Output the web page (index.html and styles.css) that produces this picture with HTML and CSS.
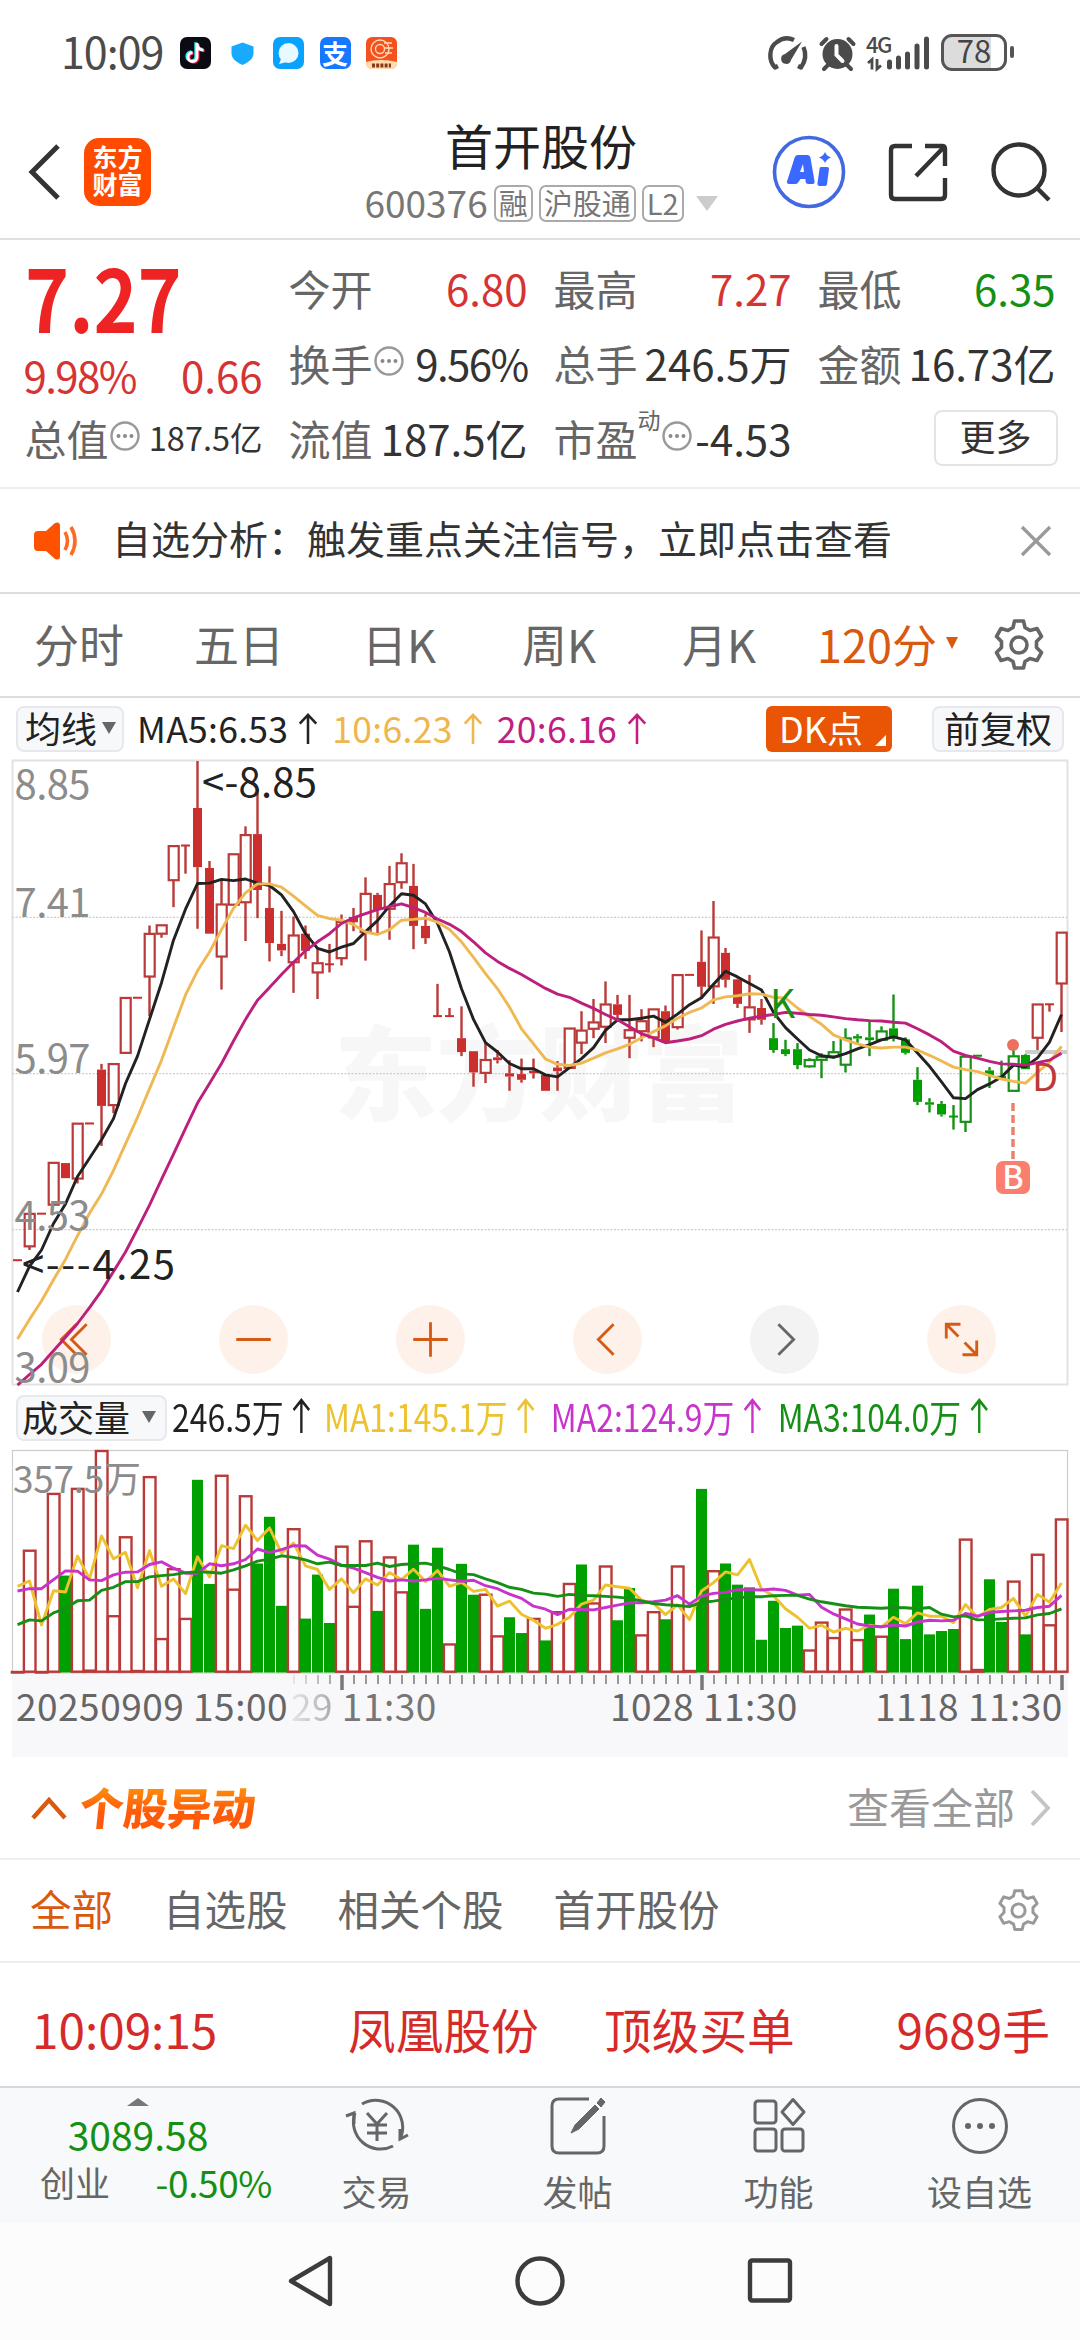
FILE: index.html
```html
<!DOCTYPE html>
<html lang="zh-CN">
<head>
<meta charset="utf-8">
<title>首开股份 600376</title>
<link rel="stylesheet" href="styles.css">
</head>
<body>
<svg class="defs" width="0" height="0">
  <symbol id="up" viewBox="0 0 20 32"><path d="M10 32V2M1.500 11L10 2l8.500 9" fill="none" stroke="currentColor" stroke-width="2.600"/></symbol>
  <symbol id="gear" viewBox="0 0 52 52"><path d="M21.500 2h9l1.500 6.500 5 3 7-2 4.500 8-5 5v6l5 5-4.500 8-7-2-5 3-1.500 6.500h-9L20 42.500l-5-3-7 2-4.500-8 5-5v-6l-5-5 4.500-8 7 2 5-3z" fill="none" stroke="currentColor" stroke-width="3.600" stroke-linejoin="round"/><circle cx="26" cy="26" r="8" fill="none" stroke="currentColor" stroke-width="3.600"/></symbol>
  <symbol id="info" viewBox="0 0 30 30"><circle cx="15" cy="15" r="13.500" fill="none" stroke="#999" stroke-width="2.400"/><g fill="#888"><circle cx="8.500" cy="15" r="2"/><circle cx="15" cy="15" r="2"/><circle cx="21.500" cy="15" r="2"/></g></symbol>
</svg>

<div class="status">
  <span class="clock">10:09</span>
  <div class="apps">
    <svg width="31" height="32" viewBox="0 0 31 32"><rect width="31" height="32" rx="7" fill="#0b0b14"/><path d="M17 6v14a4.500 4.500 0 1 1-4.500-4.500M17 7c.5 4 3 6 6.500 6" fill="none" stroke="#2ee" stroke-width="3" transform="translate(-1.200 -.8)"/><path d="M17 6v14a4.500 4.500 0 1 1-4.500-4.500M17 7c.5 4 3 6 6.500 6" fill="none" stroke="#f25" stroke-width="3" transform="translate(1 .8)"/><path d="M17 6v14a4.500 4.500 0 1 1-4.500-4.500M17 7c.5 4 3 6 6.500 6" fill="none" stroke="#fff" stroke-width="2.800"/></svg>
    <svg width="31" height="32" viewBox="0 0 31 32"><path d="M15.500 5.500l11 4v7c0 5-5 9-11 11.500-6-2.500-11-6.500-11-11.500v-7z" fill="#18aaff"/></svg>
    <svg width="31" height="32" viewBox="0 0 31 32"><rect width="31" height="32" rx="7" fill="#0aa2ff"/><circle cx="15.500" cy="16" r="10" fill="#e8f9ff"/><path d="M8 22l-2 5 8-2z" fill="#e8f9ff"/></svg>
    <span class="app-zhi">支</span>
    <svg width="31" height="32" viewBox="0 0 31 32"><rect width="31" height="32" rx="6" fill="#f4511e"/><circle cx="14" cy="12" r="9" fill="none" stroke="#ffd9b8" stroke-width="1.400"/><circle cx="14" cy="12" r="4.500" fill="none" stroke="#ffd9b8" stroke-width="1.400"/><path d="M18 6h8M19 11h8M19 16h7" stroke="#ffd9b8" stroke-width="1.400"/><path d="M0 25q15-4 31 0v2q-1 5-6 5H6q-5 0-6-5z" fill="#ffdcae"/><path d="M6 28.500h19" stroke="#8a3a1a" stroke-width="4" stroke-dasharray="3 1.200"/></svg>
  </div>
  <div class="sys">
    <svg width="40" height="34" viewBox="0 0 40 34"><g fill="none" stroke="#4b4b4b" stroke-width="4.400"><path d="M10 30l-3 1.500C0 24 1 11 9 6c5-4 11-5 17-2M35.500 11c3 7 2 14-2.500 20.500l-3-1.500" stroke-linejoin="round"/></g><path d="M34 5.500L23 24a5 5 0 1 1-6-6z" fill="#4b4b4b"/></svg>
    <svg width="37" height="36" viewBox="0 0 37 36"><circle cx="18.500" cy="19" r="15" fill="#4b4b4b"/><path d="M9 30l-4 4M28 30l4 4M2.500 9l5-5M34.500 9l-5-5" stroke="#4b4b4b" stroke-width="4" stroke-linecap="round"/><path d="M17.500 11v9l6 6" fill="none" stroke="#fff" stroke-width="4" stroke-linecap="round"/></svg>
    <div class="cell">
      <b>4G</b>
      <svg width="66" height="34" viewBox="0 0 66 34"><g stroke="#4b4b4b" fill="none"><path d="M1 27l4-3.500v10M10 23v10l4-3.500" stroke-width="2.800"/><g stroke-width="5" stroke-linecap="round"><path d="M22.500 26v5M31.500 22v9M40.500 18v13M50 10v21M59.500 3v28"/></g></g></svg>
    </div>
    <div class="battery">78</div>
  </div>
</div>

<header class="head">
  <svg class="back" width="36" height="58" viewBox="0 0 36 58"><path d="M32 3L6 29l26 26" fill="none" stroke="#333" stroke-width="5"/></svg>
  <div class="logo">东方<br>财富</div>
  <div class="title">
    <h1>首开股份</h1>
    <div class="sub"><span>600376</span><i>融</i><i>沪股通</i><i>L2</i><svg width="22" height="15" viewBox="0 0 22 15"><path d="M0 0h22L11 15z" fill="#ccc"/></svg></div>
  </div>
  <div class="acts">
    <svg width="74" height="74" viewBox="0 0 74 74"><circle cx="37" cy="37" r="34.500" fill="none" stroke="#4169e1" stroke-width="3.600"/><path d="M26 20h9q3 0 3.500 3l4 23q.5 3-2 3h-4q-3 0-3-3v-2h-5l-2 3q-1 2-3 2h-6q-4 0-2-4l7-22q1-3 3.500-3zM31 29l-3 8h4z" fill="#3b69ff" fill-rule="evenodd"/><path d="M49 32h6q2 0 2 2l-2 15q0 2-2 2h-5q-3 0-2.500-3l2-14q0-2 1.500-2z" fill="#3b69ff"/><path d="M53 17q1.500 4 6 5.500-4.500 1.500-6 5.500-1.500-4-6-5.500 4.500-1.500 6-5.500z" fill="#3b69ff"/></svg>
    <svg width="60" height="60" viewBox="0 0 60 60"><path d="M24 4H7q-4 0-4 4v45q0 4 4 4h46q4 0 4-4V36M37 4h17q3 0 3 3v17M57 4L28 34" fill="none" stroke="#333" stroke-width="4.400"/></svg>
    <svg width="62" height="62" viewBox="0 0 62 62"><circle cx="29" cy="29" r="25.500" fill="none" stroke="#333" stroke-width="4.400"/><path d="M47 47l12 12" stroke="#333" stroke-width="4.400"/></svg>
  </div>
</header>

<section class="quote">
  <div class="price"><strong>7.27</strong></div>
  <div class="q"><span>今开</span><em class="up">6.80</em></div>
  <div class="q"><span>最高</span><em class="up">7.27</em></div>
  <div class="q"><span>最低</span><em class="down">6.35</em></div>
  <div class="q low"><em class="up pct">9.98%</em><em class="up">0.66</em></div>
  <div class="q"><span>换手</span><svg class="info"><use href="#info"/></svg><em class="pct">9.56%</em></div>
  <div class="q"><span>总手</span><em>246.5万</em></div>
  <div class="q"><span>金额</span><em>16.73亿</em></div>
  <div class="q"><span>总值</span><svg class="info"><use href="#info"/></svg><em class="small">187.5亿</em></div>
  <div class="q"><span>流值</span><em>187.5亿</em></div>
  <div class="q"><span>市盈</span><sup>动</sup><svg class="info"><use href="#info"/></svg><em>-4.53</em></div>
  <div class="q end"><button class="more">更多</button></div>
</section>

<section class="notice">
  <svg width="46" height="38" viewBox="0 0 46 38"><path d="M4 9h8L21 1q5-2 5 3v30q0 5-5 3l-9-8H4q-4 0-4-4V13q0-4 4-4z" fill="#ff5200"/><path d="M31 10q5 9 0 18M37 5q8 14 0 28" fill="none" stroke="#ff6a22" stroke-width="3.600"/></svg>
  <p>自选分析：触发重点关注信号，立即点击查看</p>
  <svg width="30" height="30" viewBox="0 0 30 30"><path d="M1 1l28 28M29 1L1 29" stroke="#999" stroke-width="3.200"/></svg>
</section>

<nav class="periods">
  <span>分时</span><span>五日</span><span>日K</span><span>周K</span><span>月K</span>
  <span class="on">120分<svg width="12" height="12" viewBox="0 0 12 12"><path d="M0 0h12L6 12z" fill="#d9590f"/></svg></span>
  <svg class="gear" width="52" height="52"><use href="#gear"/></svg>
</nav>

<section class="ma">
  <button class="chip">均线<svg width="14" height="12" viewBox="0 0 14 12"><path d="M0 0h14L7 12z" fill="#666"/></svg></button>
  <span class="k">MA5:6.53<svg class="arr"><use href="#up"/></svg></span>
  <span class="y">10:6.23<svg class="arr"><use href="#up"/></svg></span>
  <span class="m">20:6.16<svg class="arr"><use href="#up"/></svg></span>
  <button class="dk">DK点</button>
  <button class="chip adj">前复权</button>
</section>

<section class="kline">
  <div class="tools">
    <i><svg viewBox="0 0 68 68"><path d="M34 19L19 34l15 15M44 19L29 34l15 15"/></svg></i>
    <i><svg viewBox="0 0 68 68"><path d="M17 34h34"/></svg></i>
    <i><svg viewBox="0 0 68 68"><path d="M17 34h34M34 17v34"/></svg></i>
    <i><svg viewBox="0 0 68 68"><path d="M40 19L25 34l15 15"/></svg></i>
    <i class="off"><svg viewBox="0 0 68 68"><path d="M28 19l15 15-15 15"/></svg></i>
    <i><svg viewBox="0 0 68 68"><path d="M33 19H19v14M19 19l12 12M49 35v14H35M49 49L37 37"/></svg></i>
  </div>
  <svg id="kline" width="1080" height="626" viewBox="0 0 1080 626"></svg>
</section>

<section class="volbar">
  <button class="chip">成交量<svg width="14" height="12" viewBox="0 0 14 12"><path d="M0 0h14L7 12z" fill="#666"/></svg></button>
  <div class="legend">
    <span class="k">246.5万<svg class="arr"><use href="#up"/></svg></span>
    <span class="y">MA1:145.1万<svg class="arr"><use href="#up"/></svg></span>
    <span class="p">MA2:124.9万<svg class="arr"><use href="#up"/></svg></span>
    <span class="g">MA3:104.0万<svg class="arr"><use href="#up"/></svg></span>
  </div>
</section>

<section class="volume"><svg id="volume" width="1080" height="225" viewBox="0 0 1080 225"></svg></section>

<section class="axis">
  <svg id="ticks" width="1056" height="17" viewBox="12 0 1056 17"></svg>
  <div class="dates"><span>20250909 15:00</span><span class="d2"><b>29</b> 11:30</span><span class="d3">1028 11:30</span><span class="d4">1118 11:30</span></div>
</section>

<section class="moves">
  <svg width="36" height="24" viewBox="0 0 36 24"><path d="M2 22L18 4l16 18" fill="none" stroke="#d9590f" stroke-width="4.400"/></svg>
  <h2>个股异动</h2>
  <span>查看全部</span>
  <svg width="22" height="38" viewBox="0 0 22 38"><path d="M2 2l16 17L2 36" fill="none" stroke="#c4c4c4" stroke-width="3.800"/></svg>
</section>

<nav class="filters"><span class="on">全部</span><span>自选股</span><span>相关个股</span><span>首开股份</span><svg class="gear" width="43" height="43" viewBox="0 0 52 52"><use href="#gear" width="52" height="52"/></svg></nav>

<section class="trade"><span>10:09:15</span><span>凤凰股份</span><span>顶级买单</span><span>9689手</span></section>

<footer class="dock">
  <div class="index">
    <svg width="22" height="8" viewBox="0 0 22 8"><path d="M0 8L11 0l11 8z" fill="#777"/></svg>
    <b>3089.58</b>
    <div><span>创业</span><em>-0.50%</em></div>
  </div>
  <div class="item"><svg width="66" height="60" viewBox="0 0 66 60"><g fill="none" stroke="#666" stroke-width="3"><path d="M18 8A27 27 0 0 1 56 43M49 50A27 27 0 0 1 11 17"/><path d="M2 20l8-3v11M64 39l-8 4V33"/><path d="M23 17l10 11 10-11M33 28v17M23 29h20M23 37h20"/></g></svg>交易</div>
  <div class="item"><svg width="58" height="60" viewBox="0 0 58 60"><path d="M40 3H10q-7 0-7 7v40q0 7 7 7h38q7 0 7-7V20" fill="none" stroke="#666" stroke-width="3"/><path d="M22 37l4-8L46 9l4 4-20 20zM48 7l4-5 4 4-4 5z" fill="#666" stroke="#666" stroke-width="1"/></svg>发帖</div>
  <div class="item"><svg width="54" height="60" viewBox="0 0 54 60"><g fill="none" stroke="#666" stroke-width="3"><rect x="3" y="5" width="21" height="22" rx="3"/><rect x="3" y="33" width="21" height="22" rx="3"/><rect x="30" y="33" width="21" height="22" rx="3"/><path d="M41 3.500l11 12.500-11 12.500L30 16z" stroke-linejoin="round"/></g></svg>功能</div>
  <div class="item"><svg width="60" height="60" viewBox="0 0 60 60"><circle cx="30" cy="30" r="26.500" fill="none" stroke="#666" stroke-width="3"/><g fill="#666"><circle cx="18" cy="30" r="3"/><circle cx="30" cy="30" r="3"/><circle cx="42" cy="30" r="3"/></g></svg>设自选</div>
</footer>

<div class="sysnav">
  <svg width="46" height="52" viewBox="0 0 46 52"><path d="M43 3v46L4 26z" fill="none" stroke="#3c3c3c" stroke-width="4.400" stroke-linejoin="round"/></svg>
  <svg width="50" height="52" viewBox="0 0 50 52"><circle cx="25" cy="26" r="22.500" fill="none" stroke="#3c3c3c" stroke-width="4.400"/></svg>
  <svg width="46" height="52" viewBox="0 0 46 52"><rect x="3" y="5.500" width="40" height="40" rx="2" fill="none" stroke="#3c3c3c" stroke-width="4.400"/></svg>
</div>
<script src="chart.js"></script>
</body>
</html>
```
FILE: styles.css
```css
* { box-sizing: border-box; margin: 0; padding: 0; }
body {
  width: 1080px; height: 2340px; overflow: hidden; background: #fff; color: #333;
  font-family: "Noto Sans CJK SC", "Noto Sans", sans-serif; line-height: 1;
  display: flex; flex-direction: column;
}
body > * { flex: none; }
.defs { display: none; }
svg { display: block; flex: none; overflow: visible; }
i, em { font-style: normal; }
button { font-family: inherit; color: #333; border: 0; background: none; line-height: 1; }
span, p, em, b, button { white-space: nowrap; flex: none; }

.status { height: 105px; display: flex; align-items: center; padding: 0 68px 0 61px; }
.clock { width: 119px; font-size: 43px; letter-spacing: -1px; color: #4b4b4b; padding-bottom: 5px; }
.apps { display: flex; gap: 15.500px; }
.app-zhi { width: 31px; height: 32px; border-radius: 7px; background: #1677ff; color: #fff; font-size: 26px; font-weight: 700; line-height: 31px; text-align: center; }
.sys { margin-left: auto; display: flex; align-items: center; }
.sys > svg { margin-right: 11px; }
.cell { position: relative; width: 64px; height: 34px; margin-right: 10px; }
.cell b { position: absolute; left: -1px; top: -3px; font-size: 22px; line-height: 20px; letter-spacing: -1.500px; color: #4b4b4b; font-weight: 500; }
.battery { position: relative; width: 66px; height: 37px; border: 3px solid #555; border-radius: 11px; background: linear-gradient(90deg, #dcdcdc 78%, #fff 78%); color: #444; font-size: 31px; line-height: 26px; text-align: center; margin-right: 5px; }
.battery::after { content: ""; position: absolute; right: -10px; top: 9px; width: 4px; height: 12px; border-radius: 2px; background: #555; }

.head { height: 135px; border-bottom: 2px solid #e0e0e0; display: grid; grid-template-columns: 58px 244px 426px 1fr; align-items: center; padding-left: 26px; }
.logo { width: 67px; height: 68px; border-radius: 15px; background: #ff4b00; color: #fff; font-size: 25px; font-weight: 700; line-height: 27px; text-align: center; padding-top: 5px; }
.title { display: flex; flex-direction: column; align-items: center; margin-top: 2px; }
h1 { font-size: 48px; font-weight: 400; line-height: 56px; color: #222; }
.sub { display: flex; align-items: center; gap: 6px; height: 52px; margin-top: 6px; font-size: 37px; color: #777; }
.sub span { padding-bottom: 2px; }
.sub i { font-size: 29px; height: 37px; line-height: 31px; padding: 0 3px; border: 2px solid #aaa; border-radius: 7px; color: #777; }
.sub svg { margin-left: 6px; }
.acts { display: flex; align-items: center; gap: 42px; padding-left: 18px; }

.quote { height: 249px; border-bottom: 2px solid #eee; display: grid; grid-template-columns: 238px 239px 238px 238px; grid-template-rows: repeat(3, 75px); column-gap: 26px; padding: 10px 0 0 24.500px; }
.q { display: flex; align-items: center; font-size: 42px; color: #666; }
.q em { margin-left: auto; color: #333; }
.q em.up { color: #d63333; }
.q em.down { color: #159015; }
.q em.pct { letter-spacing: -1.600px; }
.q.low { padding-top: 24px; }
.q.low em:first-child { margin-left: -1px; }
.q em.small { font-size: 32.500px; }
.q sup { font-size: 23px; align-self: flex-start; padding-top: 8px; }
.q.end { justify-content: flex-end; margin-right: -2px; }
.info { width: 30px; height: 30px; margin: 0 0 3px 1px; }
.price { display: flex; align-items: center; }
.price strong { font-size: 86px; font-weight: 700; color: #ee2424; line-height: 75px; transform: scaleX(.87); transform-origin: left; padding-top: 16px; }
.more { width: 124px; height: 56px; border: 2px solid #e4e4e4; border-radius: 8px; font-size: 36px; padding-bottom: 6px; }

.notice { height: 105px; border-bottom: 2px solid #ddd; display: flex; align-items: center; padding: 0 29px 0 34px; }
.notice p { margin-left: 32px; margin-right: auto; font-size: 39px; padding-bottom: 6px; }

.periods { height: 104px; border-bottom: 2px solid #ddd; display: grid; grid-template-columns: repeat(5, 160px) 172px 1fr; align-items: center; font-size: 45px; color: #666; }
.periods span { text-align: center; padding-bottom: 4px; margin-left: -2px; }
.periods .on { display: flex; align-items: center; gap: 9px; padding-left: 19px; color: #d9590f; }
.gear { color: #666; }
.periods .gear { margin-left: 21px; }

.ma { height: 62px; display: flex; align-items: center; padding: 0 16px; font-size: 35.500px; }
.chip { height: 46px; border: 2px solid #e6e8ee; border-radius: 8px; background: #f7f8fa; font-size: 36px; display: flex; align-items: center; justify-content: space-between; padding: 0 4px 4px 8px; color: #222; }
.chip svg { margin-right: 3px; margin-top: 2px; }
.ma .chip { width: 108px; padding-left: 7px; }
.ma .chip svg { margin-right: 2px; }
.ma span { display: flex; align-items: center; margin-right: 14px; padding-bottom: 3px; letter-spacing: .3px; }
.ma .k { margin-left: 13px; }
.arr { width: 20px; height: 31px; margin-left: 10px; }
.ma .arr { margin-top: 2px; }
.k { color: #222; } .y { color: #efb64d; } .m { color: #c01f80; } .p { color: #c833cc; } .g { color: #168f16; }
.dk { margin-left: auto; position: relative; width: 126px; height: 46px; border-radius: 6px; background: #e95504; color: #fff; font-size: 36px; text-align: left; padding: 0 0 5px 13px; }
.dk::after { content: ""; position: absolute; right: 6px; bottom: 6px; border-left: 11px solid transparent; border-bottom: 11px solid #fff; }
.ma .adj { width: 132px; margin-left: 40px; padding: 0 0 4px; justify-content: center; }

.kline { position: relative; height: 626px; }
#kline { position: relative; }
.tools { position: absolute; left: 42px; top: 545px; display: flex; gap: 108px; }
.tools i { width: 69px; height: 69px; border-radius: 50%; background: #fef1e9; }
.tools svg { width: 69px; height: 69px; fill: none; stroke: #d55a14; stroke-width: 2.800; }
.tools .off { background: #f3f3f3; }
.tools .off svg { stroke: #666; }

.volbar { height: 63px; display: flex; align-items: center; padding: 0 16px; }
.volbar .chip { width: 151px; padding-left: 4px; }
.volbar .chip svg { margin-right: 5px; }
.legend { display: grid; grid-template-columns: 181px 270px 270px 250px; margin-left: 5px; font-size: 38px; transform: scaleX(.84); transform-origin: left; }
.legend span { display: flex; align-items: center; padding-bottom: 4px; }
.legend .y { color: #ecc22e; }
.legend .arr { margin-left: 10px; width: 22px; height: 35px; }

.volume { height: 225px; }
.volume svg { margin-top: -.5px; }

.axis { height: 83px; margin: 0 12px; background: #f8f8fa; }
.dates { display: grid; grid-template-columns: 275px 319px 265px 1fr; padding: 0 0 0 4px; margin-top: -6px; line-height: 40px; font-size: 37px; letter-spacing: .5px; color: #666; }
.dates .d2 { color: #777; }
.dates b { font-weight: 400; color: transparent; background: linear-gradient(90deg, #e6e6e6, #aaa); -webkit-background-clip: text; background-clip: text; }

.moves { height: 103px; border-bottom: 2px solid #eee; display: flex; align-items: center; padding: 0 28px 0 31px; }
h2 { margin-left: 13px; font-size: 44px; font-weight: 900; line-height: 60px; margin-top: -4px; transform: skewX(-6deg); background: linear-gradient(#ff8c0a 20%, #ff5a0a 60%); -webkit-background-clip: text; background-clip: text; color: transparent; }
.moves span { margin-left: auto; margin-right: 15px; font-size: 42px; color: #999; padding-bottom: 3px; }

.filters { height: 103px; border-bottom: 2px solid #eee; display: flex; align-items: center; gap: 50px; padding: 0 40px 0 30px; font-size: 41.500px; color: #666; }
.filters span { padding-bottom: 3px; }
.filters .on { color: #d9590f; }
.filters .gear { margin-left: auto; color: #999; }

.trade { height: 123px; display: grid; grid-template-columns: 316px 256px 200px 1fr; align-items: center; padding: 8px 30px 0 32px; font-size: 47.700px; color: #d62a2a; }
.trade span:last-child { text-align: right; }

.dock { height: 137px; border-top: 2px solid #d5d9dc; background: #f7f9fa; display: grid; grid-template-columns: 276px repeat(4, 201px); }
.index { display: flex; flex-direction: column; align-items: center; padding-top: 10px; }
.index b { font-size: 39px; font-weight: 400; line-height: 50px; margin-top: 3px; color: #159015; }
.index div { display: flex; width: 232px; margin-left: 36px; justify-content: space-between; align-items: center; font-size: 35px; line-height: 48px; color: #666; margin-top: -1px; }
.index em { color: #159015; font-size: 37px; letter-spacing: -.4px; }
.item { display: flex; flex-direction: column; align-items: center; gap: 17px; padding-top: 8px; font-size: 35px; color: #666; }

.sysnav { height: 117px; background: #fcfcfc; display: flex; justify-content: center; align-items: center; gap: 182px; padding-bottom: 2px; }
```
FILE: chart.js
```js
// Plot units: 2.45 per pixel for the price pane, 2.976 per pixel for the volume pane.
const X = i => 17.5 + i * 12;
const PY = v => (v - 24.5) / 2.45;
const VY = v => (v - 205.3) / 2.976;
const RED = '#b93a38', GREEN = '#169016';

// high, body top, body bottom, low, style (o/f red hollow/filled, g/G green hollow/filled)
const candles = `1250 1250 1250 1250 f,1135 1135 1217 1225 o,1136 1136 1136 1136 f,1010 1010 1115 1115 o,1012 1012 1049 1049 f,914 914 1051 1062 o,915 915 915 915 f,769 783 872 970 f,768 768 871 890 o,606 606 743 743 o,607 607 607 607 f,430 449 556 652 o,428 428 451 460 o,234 234 320 385 o,234 234 234 303 f,27 142 287 438 f,272 289 450 450 f,320 377 507 587 o,254 254 380 380 o,187 207 374 468 o,95 206 343 412 f,285 387 473 518 f,394 475 491 505 f,408 453 521 595 o,430 450 492 512 f,488 521 546 610 o,475 525 525 545 f,403 420 511 528 o,387 409 422 444 f,312 351 447 516 o,350 355 392 452 f,284 327 390 465 o,253 276 325 340 o,279 333 431 488 f,402 431 461 475 f,573 652 652 652 f,632 652 652 652 f,628 706 740 750 f,738 738 790 825 f,715 758 792 816 o,735 753 760 768 f,760 792 800 835 f,756 794 808 815 f,756 786 792 805 f,796 796 835 835 f,762 778 787 835 f,681 681 780 780 o,640 686 718 745 o,610 666 684 706 o,567 622 679 718 o,600 623 649 660 f,600 685 706 755 o,635 663 690 714 o,634 634 705 728 o,626 640 716 716 f,550 550 680 685 o,551 551 551 551 f,442 519 580 610 f,370 458 580 622 o,485 497 563 582 f,560 562 622 632 f,551 629 661 693 o,610 632 661 673 f,669 706 735 742 G,710 733 745 750 G,718 733 772 782 G,755 758 776 778 g,743 750 760 804 g,713 739 752 756 g,682 705 772 790 g,696 701 707 718 G,663 704 711 750 G,677 688 711 713 g,599 682 704 714 G,704 709 742 746 G,777 808 862 870 G,853 863 869 888 G,860 867 893 898 G,870 898 898 930 G,750 750 912 936 g,749 749 749 749 G,777 785 797 828 G,761 798 806 806 G,715 749 836 836 g,745 747 782 782 G,622 622 706 735 o,623 623 623 641 f,446 446 573 691 o`;
const ma5 = [1328,1265,1225,1160,1112,1045,1000,955,903,817,750,660,570,466,390,327,326,317,320,316,326,332,355,396,450,486,495,483,474,445,418,382,352,356,377,425,495,585,660,717,740,768,781,781,796,801,778,756,729,687,661,661,657,652,667,647,624,607,574,542,556,572,588,643,680,708,735,749,753,744,732,722,710,703,710,742,775,813,852,854,832,818,801,772,776,754,716,648];
const ma10 = [1443,1395,1350,1298,1248,1190,1135,1088,1030,965,900,830,760,680,600,541,495,440,388,350,328,328,336,358,382,405,413,417,428,446,452,440,417,415,412,422,440,470,508,548,585,630,683,720,757,770,773,767,755,742,732,721,705,690,676,657,643,632,612,605,602,597,598,606,608,632,653,672,698,710,720,728,730,728,728,735,748,762,777,783,788,797,806,812,816,790,765,726];
const ma20 = [1556,1530,1505,1472,1439,1405,1366,1325,1278,1230,1173,1115,1052,990,927,865,817,768,713,660,613,582,550,520,492,470,450,425,411,401,391,384,377,386,398,414,427,445,470,497,518,535,550,567,584,598,606,620,633,648,661,678,695,705,717,713,708,700,684,672,664,657,652,648,643,645,648,650,654,658,661,663,664,667,669,683,698,715,738,748,755,763,769,770,772,766,760,743];
const vols = 'r866 r505 r866 r336 g582 r321 r862 r200 r700 r465 r863 r286 r768 r560 r708 g297 g607 r282 r621 r343 g546 g407 g672 r441 g710 g579 g723 r493 r672 r477 g687 r525 r629 g490 g681 g499 r784 g547 g639 r636 r760 g706 g753 r708 g775 r688 r604 g549 r662 r552 g715 g619 r757 r688 g712 r552 r863 g324 r566 g546 g609 g617 g773 g657 g738 g731 r802 r719 r765 r680 r771 g698 r761 g621 g771 g612 g757 g747 g741 r472 r860 g593 g720 r597 g757 r517 r727 r412'.split(' ');
const v1 = [614,598,729,627,631,524,592,464,532,513,618,508,614,592,636,526,586,493,502,432,478,440,515,485,553,564,623,592,633,592,610,573,594,563,600,567,614,602,629,623,673,658,697,715,739,727,706,667,655,610,615,620,655,665,698,669,713,628,603,571,580,534,622,642,681,706,739,730,750,739,747,730,735,706,725,693,703,703,722,668,706,683,677,650,703,638,661,604];
const v2 = [628,621,621,594,568,569,595,597,580,572,571,549,541,560,575,575,547,553,547,534,503,514,505,493,494,521,533,551,560,573,587,598,595,598,595,590,595,599,596,612,621,637,650,673,682,698,682,683,684,677,670,663,663,660,655,642,667,643,635,632,624,624,625,622,626,640,638,676,696,711,726,732,734,729,732,720,715,717,715,695,703,692,689,687,685,677,673,641];
const v3 = [728,714,717,693,680,657,655,626,617,600,600,586,582,579,573,571,572,575,565,553,539,533,523,528,535,547,542,552,552,552,545,555,549,547,545,553,564,577,579,592,603,617,623,634,637,644,638,641,642,644,646,650,657,665,669,671,674,662,658,653,648,645,645,642,641,641,652,660,666,672,676,678,679,677,678,681,677,697,705,702,714,713,711,709,708,699,695,681];

const line = (a, f, c) => `<polyline points="${a.map((v, i) => X(i) + ',' + f(v).toFixed(1)).join(' ')}" fill="none" stroke="${c}" stroke-width="2.9" stroke-linejoin="round"/>`;
const rect = (x, y, w, h, a) => `<rect x="${x}" y="${y}" width="${w}" height="${h}" ${a}/>`;
const text = (x, y, len, s, c) => `<text x="${x}" y="${y}" textLength="${len}" font-size="40" fill="${c}">${s}</text>`;

let k = `<text x="334" y="353" font-size="103" font-weight="900" fill="#f7f7f7" textLength="410">东方财富</text>`;
k += rect(12.5, .5, 1055, 624, 'fill="none" stroke="#e2e2e2" stroke-width="2"');
for (const y of [157.3, 313.6, 469.6]) k += `<path d="M12 ${y}H1067" stroke="#ccc" stroke-width="1.2" stroke-dasharray="2 1.5"/>`;
k += `<path d="M1025 292H1067" stroke="#ccc" stroke-width="4"/>`;
candles.split(',').forEach((row, i) => {
  const p = row.split(' '), x = X(i), s = p[4], c = 'of'.includes(s) ? RED : GREEN;
  const [h, t, b, l] = p.slice(0, 4).map(v => PY(+v));
  if (h < t) k += `<path d="M${x} ${h}V${t}" stroke="${c}" stroke-width="2.4"/>`;
  if (l > b) k += `<path d="M${x} ${b}V${l}" stroke="${c}" stroke-width="2.4"/>`;
  if ('og'.includes(s)) k += rect(x - 4.8, t + .6, 10, Math.max(b - t - 1, 1), `fill="#fff" stroke="${c}" stroke-width="2.2"`);
  else k += rect(x - 4.5, t - (b - t < 2 ? 1 : 0), 9, Math.max(b - t, 2), `fill="${s === 'f' ? '#cc2e2e' : '#00a000'}"`);
});
k += line(ma5, PY, '#222') + line(ma10, PY, '#efb852') + line(ma20, PY, '#bd1f7c');
[['8.85', 39], ['7.41', 157], ['5.97', 313], ['4.53', 470], ['3.09', 622]].forEach(a => k += text(14.5, a[1], 76, a[0], '#8c8c8c'));
k += text(202, 37, 115, '&lt;-8.85', '#222') + text(22, 519, 153, '&lt;---4.25', '#222');
k += `<text x="770" y="258" font-size="39" fill="#169016">K</text><text x="1032" y="331" font-size="38" fill="#b93a38">D</text>`;
k += `<circle cx="1013" cy="285" r="6" fill="#ee6f5f"/><path d="M1013 343v56" stroke="#ee8070" stroke-width="3.500" stroke-dasharray="8 4"/>`;
k += rect(996, 401, 34, 33, 'rx="7" fill="#fb7f6f"') + `<text x="1013" y="429" font-size="32" font-weight="500" text-anchor="middle" fill="#fff">B</text>`;
document.getElementById('kline').innerHTML = k;

let v = rect(12.5, 1.5, 1055, 222.5, 'fill="none" stroke="#ccc" stroke-width="1.2"');
vols.forEach((d, i) => {
  const y = Math.max(VY(+d.slice(1)), 1), x = X(i), b = 223.5;
  v += d[0] === 'r' ? rect(x - 5.6, y + 1, 11.6, Math.max(b - y - 1.8, .5), `fill="#fff" stroke="${RED}" stroke-width="2.4"`)
    : rect(x - 5.5, y, 11, b - y, 'fill="#00a000"');
});
v += line(v1, VY, '#ecc22e') + line(v2, VY, '#c833cc') + line(v3, VY, '#168f16');
v += `<text x="13" y="44" font-size="37" fill="#8c8c8c" textLength="128">357.5万</text>`;
document.getElementById('volume').innerHTML = v;

let t = '';
for (let i = 23; i < 88; i++) {
  const major = i === 27 || i === 57 || i === 87;
  t += `<path d="M${X(i) + .5} 1V${major ? 16 : 10}" stroke="${major ? '#777' : '#999'}" stroke-width="${major ? 3.5 : 2}" opacity="${i < 27 ? (i - 22) * .2 : 1}"/>`;
}
document.getElementById('ticks').innerHTML = t;
```
